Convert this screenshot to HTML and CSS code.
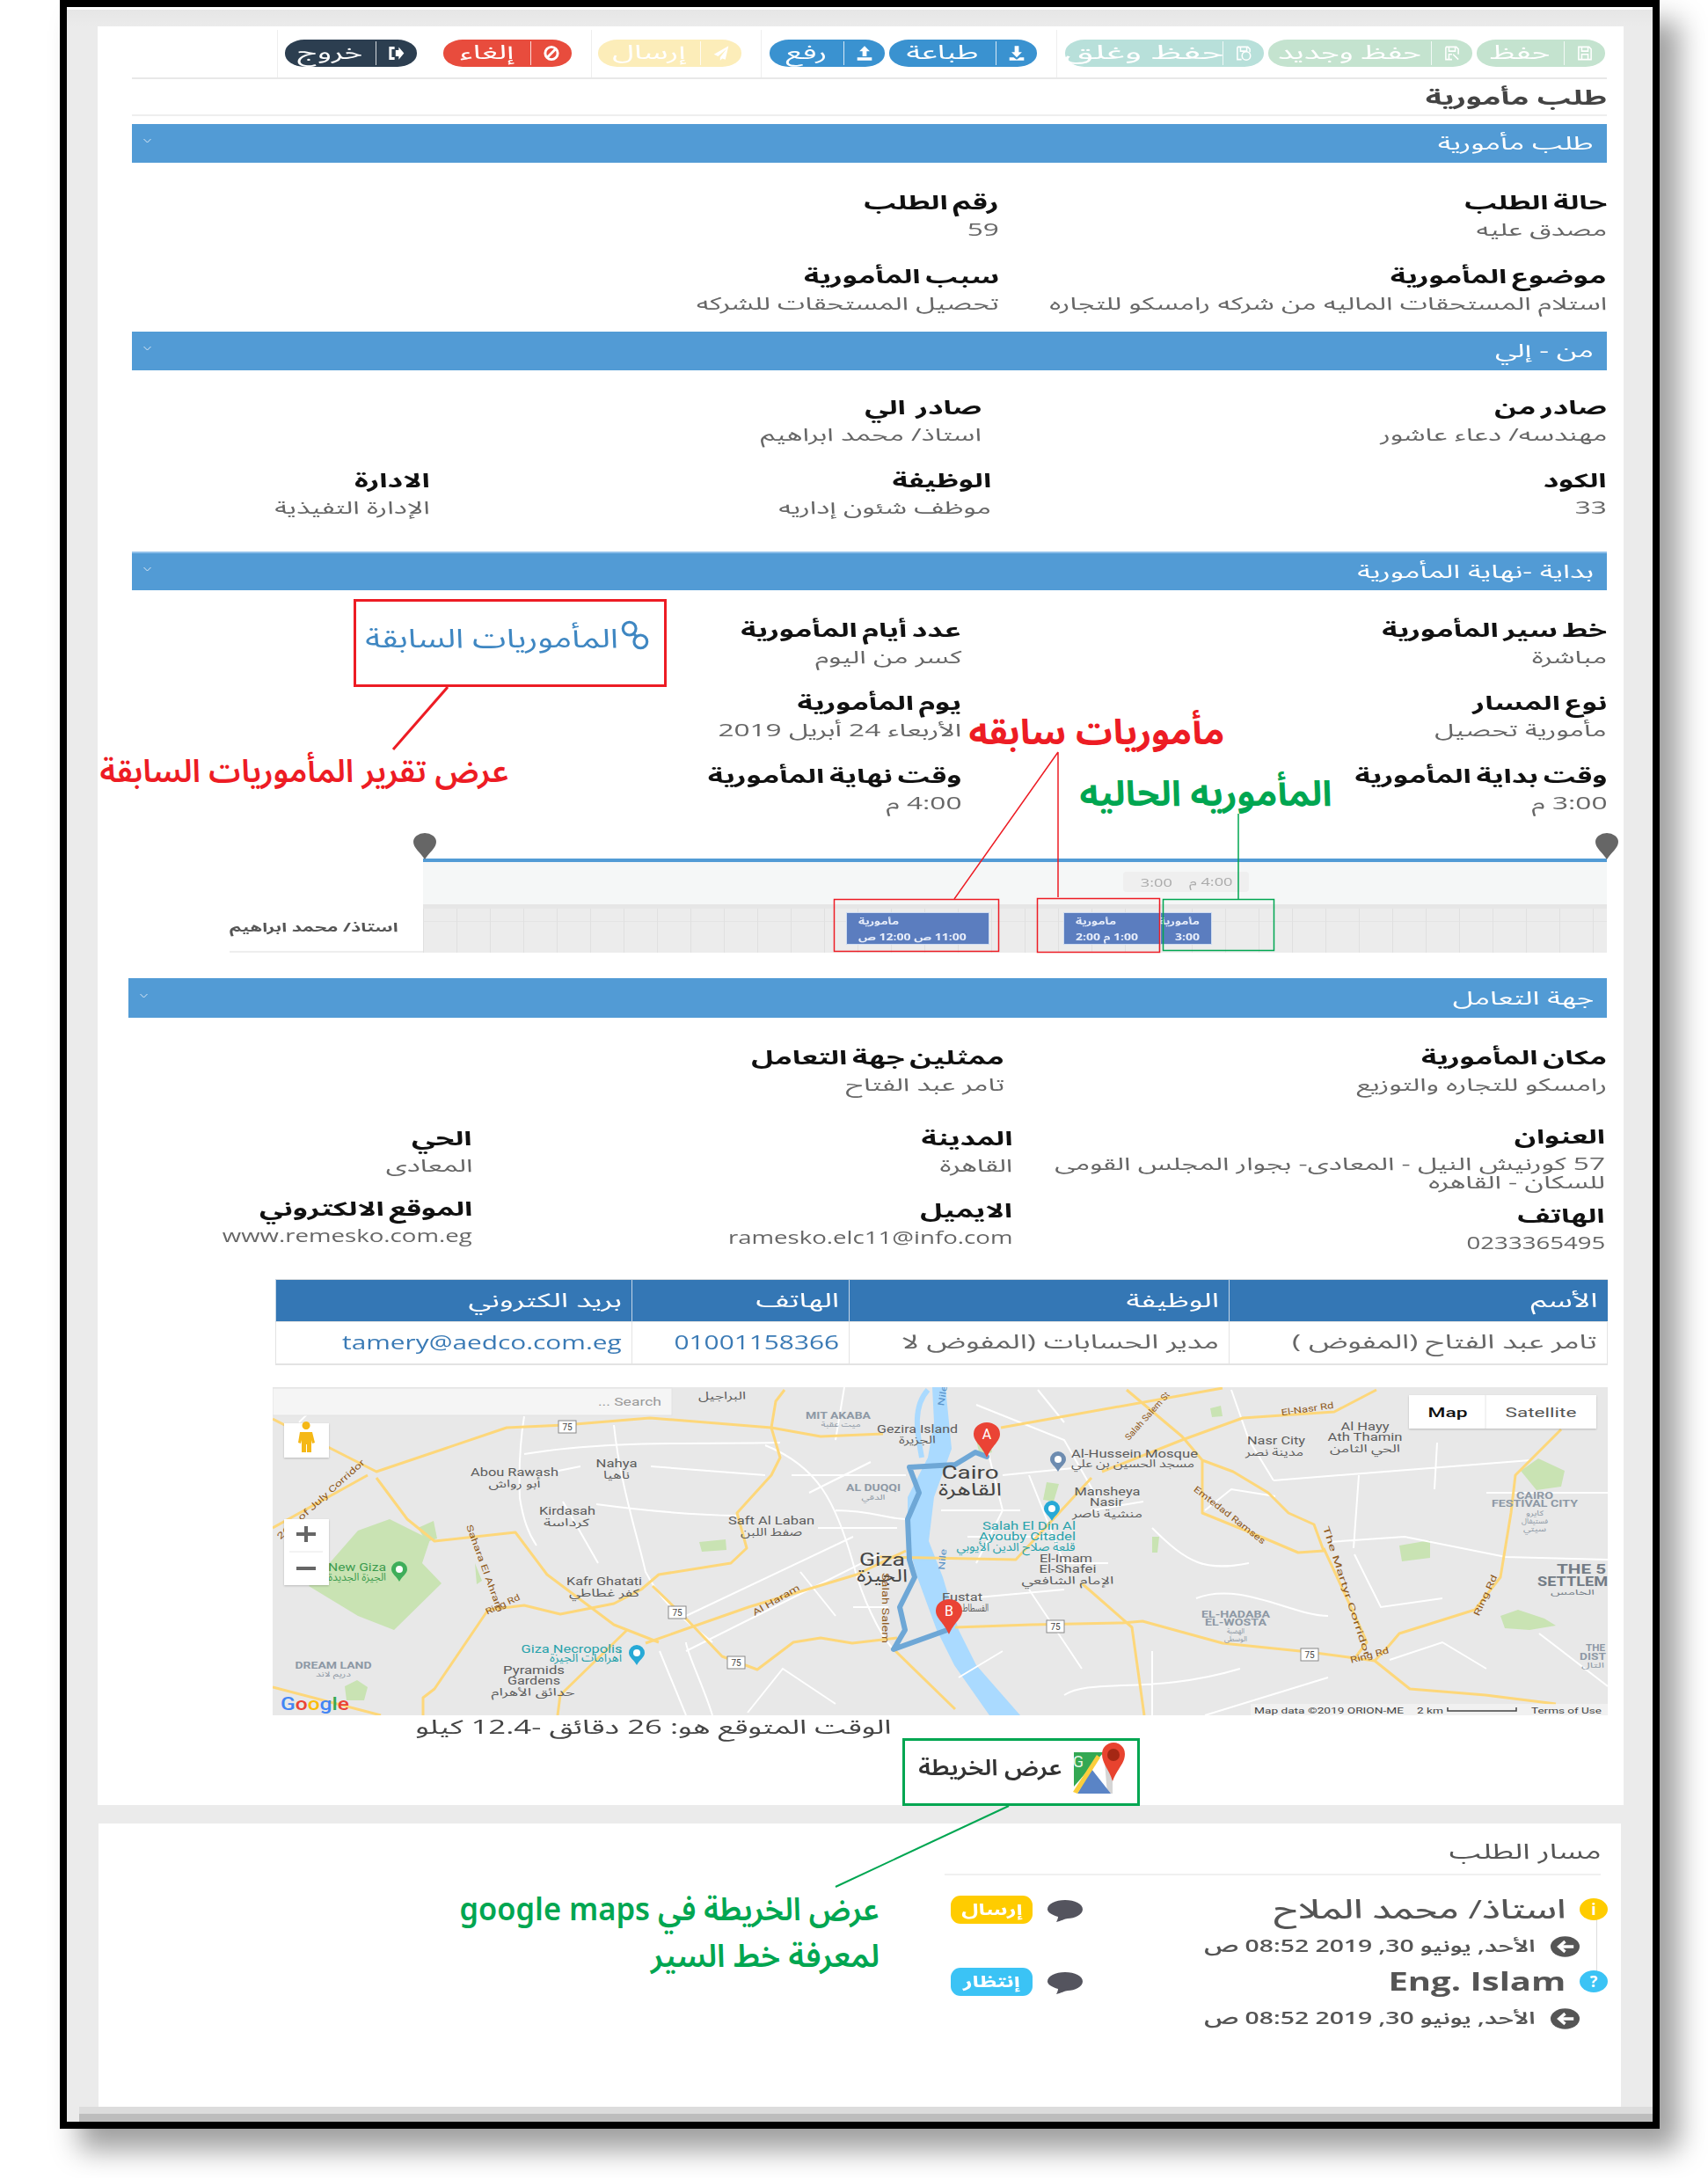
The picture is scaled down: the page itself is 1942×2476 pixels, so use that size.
FILE: index.html
```html
<!DOCTYPE html>
<html lang="ar" dir="rtl">
<head>
<meta charset="utf-8">
<title>طلب مأمورية</title>
<link rel="stylesheet" href="styles.css">
</head>
<body>
<div class="frame">
  <main class="card card-main">
    <div class="toolbar">
      <div class="tb-group tb-save">
        <a class="btn w146 c-save"><span class="btn-ico"><svg viewBox="0 0 16 16"><path d="M2 2h10l2 2v10H2zM5 2v4h6V2M5 14V9h6v5" class="ico-line"/></svg></span><span class="btn-tx">حفظ</span></a>
        <a class="btn w233 c-save"><span class="btn-ico"><svg viewBox="0 0 16 16"><path d="M2 2h10l2 2v5M2 2v12h6M5 2v4h6V2M5 14V9h3M9 9l5 5" class="ico-line"/></svg></span><span class="btn-tx">حفظ وجديد</span></a>
        <a class="btn w227 c-close"><span class="btn-ico"><svg viewBox="0 0 16 16"><path d="M2 2h10l2 2v3M2 2v12h4M5 2v4h6V2" class="ico-line"/><circle cx="10.500" cy="10.500" r="4" class="ico-line"/></svg></span><span class="btn-tx">حفظ وغلق</span></a>
      </div>
      <div class="tb-group tb-print">
        <a class="btn w168 c-blue"><span class="btn-ico"><svg viewBox="0 0 16 16"><path d="M6 1h4v6h3l-5 5-5-5h3zM1 12h4l3 2 3-2h4v3H1z" class="ico-fill"/></svg></span><span class="btn-tx">طباعة</span></a>
        <a class="btn w131 c-blue"><span class="btn-ico"><svg viewBox="0 0 16 16"><path d="M6 11h4V6h3L8 1 3 6h3zM1 12h14v3H1z" class="ico-fill"/></svg></span><span class="btn-tx">رفع</span></a>
      </div>
      <div class="tb-group tb-send">
        <a class="btn w163 c-send"><span class="btn-ico"><svg viewBox="0 0 16 16"><path d="M15 1L1 9l4 2 8-7-6 8v3l2-2 3 1z" class="ico-fill"/></svg></span><span class="btn-tx">إرسال</span></a>
      </div>
      <div class="tb-group tb-exit">
        <a class="btn w147 c-cancel"><span class="btn-ico"><svg viewBox="0 0 16 16"><circle cx="8" cy="8" r="6" class="ico-bold"/><path d="M4 12l8-8" class="ico-bold"/></svg></span><span class="btn-tx">إلغاء</span></a>
        <a class="btn w150 c-exit"><span class="btn-ico"><svg viewBox="0 0 16 16"><path d="M6 3H2v10h4" class="ico-bold"/><path d="M7 5h3V2l5 6-5 6v-3H7z" class="ico-fill"/></svg></span><span class="btn-tx">خروج</span></a>
      </div>
    </div>

    <h1 class="page-title"><span class="st-title">طلب مأمورية</span></h1>

    <section>
      <div class="bar"><span class="bar-tx">طلب مأمورية</span><svg class="chev" viewBox="0 0 10 6"><path d="M1 1l4 4 4-4"/></svg></div>
      <div class="grid g-req">
        <div class="field"><span class="lb">حالة الطلب</span><span class="vl">مصدق عليه</span></div>
        <div class="field"><span class="lb">رقم الطلب</span><span class="vl">59</span></div>
        <div class="field"><span class="lb">موضوع المأمورية</span><span class="vl">استلام المستحقات الماليه من شركه رامسكو للتجاره</span></div>
        <div class="field"><span class="lb">سبب المأمورية</span><span class="vl">تحصيل المستحقات للشركه</span></div>
      </div>
    </section>

    <section>
      <div class="bar"><span class="bar-tx">من - إلي</span><svg class="chev" viewBox="0 0 10 6"><path d="M1 1l4 4 4-4"/></svg></div>
      <div class="grid g-from">
        <div class="field"><span class="lb">صادر من</span><span class="vl">مهندسه/ دعاء عاشور</span></div>
        <div class="field"><span class="lb">صادر &nbsp;الي</span><span class="vl">استاذ/ محمد ابراهيم</span></div>
      </div>
      <div class="grid g-code">
        <div class="field"><span class="lb">الكود</span><span class="vl">33</span></div>
        <div class="field"><span class="lb">الوظيفة</span><span class="vl">موظف شئون إداريه</span></div>
        <div class="field"><span class="lb">الادارة</span><span class="vl">الإدارة التفيذية</span></div>
      </div>
    </section>

    <section>
      <div class="bar bar-hl"><span class="bar-tx">بداية -نهاية المأمورية</span><svg class="chev" viewBox="0 0 10 6"><path d="M1 1l4 4 4-4"/></svg></div>
      <div class="grid g-period">
        <div class="field"><span class="lb">خط سير المأمورية</span><span class="vl">مباشرة</span></div>
        <div class="field"><span class="lb">عدد أيام المأمورية</span><span class="vl">كسر من اليوم</span></div>
        <a class="prev-link"><svg class="link-ico" viewBox="0 0 32 36"><g class="link-ring"><circle cx="10" cy="11" r="7"/><circle cx="22" cy="25" r="7"/><path d="M14 16l4 4"/></g></svg><span class="link-tx">المأموريات السابقة</span></a>
        <div class="field"><span class="lb">نوع المسار</span><span class="vl">مأمورية تحصيل</span></div>
        <div class="field"><span class="lb">يوم المأمورية</span><span class="vl">الأربعاء 24 أبريل 2019</span></div>
        <div></div>
        <div class="field"><span class="lb">وقت بداية المأمورية</span><span class="vl">3:00 م</span></div>
        <div class="field"><span class="lb">وقت نهاية المأمورية</span><span class="vl">4:00 م</span></div>
      </div>

      <div class="schedule">
        <div class="chart">
          <svg class="pin pin-r" viewBox="0 0 26 30"><path d="M13 30C8 22 0 17 0 10a13 10 0 0 1 26 0c0 7-8 12-13 20z"/></svg>
          <svg class="pin pin-l" viewBox="0 0 26 30"><path d="M13 30C8 22 0 17 0 10a13 10 0 0 1 26 0c0 7-8 12-13 20z"/></svg>
          <div class="chart-tips"><span class="tip-tx">4:00 م</span><span class="tip-tx">3:00</span></div>
          <div class="range"></div>
          <div class="chart-grid">
            <div class="ev ev-a"><span class="ev-t">مأمورية</span><span class="ev-t">11:00 ص 12:00 ص</span></div>
            <div class="ev ev-b"><span class="ev-t">مأمورية</span><span class="ev-t">1:00 م 2:00</span></div>
            <div class="ev ev-c"><span class="ev-t">مأمورية</span><span class="ev-t">3:00</span></div>
          </div>
        </div>
        <div class="sched-label"><span class="sched-tx">استاذ/ محمد ابراهيم</span></div>
      </div>
    </section>

    <section class="sec-party">
      <div class="bar bar-wide"><span class="bar-tx">جهة التعامل</span><svg class="chev" viewBox="0 0 10 6"><path d="M1 1l4 4 4-4"/></svg></div>
      <div class="grid g-place">
        <div class="field"><span class="lb">مكان المأمورية</span><span class="vl">رامسكو للتجاره والتوزيع</span></div>
        <div class="field"><span class="lb">ممثلين جهة التعامل</span><span class="vl">تامر عبد الفتاح</span></div>
      </div>
      <div class="grid g-addr">
        <div class="field"><span class="lb">العنوان</span><span class="vl vl-addr">57 كورنيش النيل - المعادى- بجوار المجلس القومى<br>للسكان - القاهره</span></div>
        <div class="field f-low"><span class="lb">المدينة</span><span class="vl">القاهرة</span></div>
        <div class="field f-low"><span class="lb">الحي</span><span class="vl">المعادى</span></div>
        <div class="field f-r3a"><span class="lb">الهاتف</span><span class="vl" dir="ltr">0233365495</span></div>
        <div class="field f-r3b"><span class="lb">الايميل</span><span class="vl" dir="ltr">ramesko.elc11@info.com</span></div>
        <div class="field f-r3c"><span class="lb">الموقع الالكتروني</span><span class="vl" dir="ltr">www.remesko.com.eg</span></div>
      </div>

      <table class="contacts">
        <thead>
          <tr><th class="col-n"><span class="th-tx">الأسم</span></th><th class="col-j"><span class="th-tx">الوظيفة</span></th><th class="col-p"><span class="th-tx">الهاتف</span></th><th class="col-e"><span class="th-tx">بريد الكتروني</span></th></tr>
        </thead>
        <tbody>
          <tr><td><span class="td-tx">تامر عبد الفتاح (المفوض )</span></td><td><span class="td-tx">مدير الحسابات (المفوض لا</span></td><td><span class="td-tx td-link">01001158366</span></td><td><span class="td-tx td-link">tamery@aedco.com.eg</span></td></tr>
        </tbody>
      </table>

      <div class="map">
        <svg class="map-svg" viewBox="0 0 1518 373" role="img" aria-label="خريطة">
          <rect width="1518" height="373" class="m-bg"/>
          <path class="m-park" d="M97 163L133 150 179 173 170 200 192 223 138 276 97 260 41 226 62 203z"/>
          <path class="m-park" d="M82 340l14-7 12 8-4 15-20 0zM1281 180l35-6 0 20-32 4zM1396 260l20-7 30 10 13 8-30 5-28-2zM1419 95l20-14 30 14-4 18-28 4zM1066 24l12-3 2 12-12 1zM485 176l30-3 1 12-28 2zM880 108l14 2-6 20-12-2zM230 200l8 20-6 4zM165 160l18-8 4 20-12 4zM1000 170l8 0-2 18-6 0zM800 60l14-6 4 20-14 4z"/>
          <path class="m-river" d="M750 0L752 40 745 80 722 125 722 175 733 216 755 276 775 316 815 373H850L800 316 780 276 762 216 746 175 752 125 772 70 765 0z"/>
          <path class="m-river2" d="M745 3C725 25 735 60 738 80"/>
          <g class="m-white">
            <path d="M286 76C380 60 480 65 577 63M388 43C395 110 415 170 424 210 445 250 470 265 500 290M286 33C280 70 280 100 281 126 285 150 290 165 300 180M368 133C420 140 470 145 528 146M0 30L20 15M470 260L660 170M470 300L690 190M560 66C620 90 640 130 660 200 670 240 690 280 704 296M650 0L640 60M590 100L720 100M540 370L580 320 640 360M640 140C680 140 700 150 720 150M500 373C490 340 470 300 470 290M330 130L370 200M300 100L350 90M430 90L560 100M620 160L710 160M610 120L680 85M600 210L640 260M660 250L700 250M30 40L60 10M470 373L440 300"/>
            <path d="M1138 106L1430 83M1201 176L1287 170 1402 193 1518 196M1235 100L1229 183M1324 63L1321 116M1060 140L1090 116 1140 124M900 350C930 330 1000 350 1100 320M1000 160C1040 200 1060 210 1110 200M1050 240C1100 220 1160 260 1200 260M860 100L900 200 950 200M1230 190L1260 250 1330 240M1380 120L1518 120M1440 280L1518 340M1270 310L1330 290 1380 320M810 60L830 140 800 200M760 140H850M790 240L900 230M800 20L900 60 940 130M830 100L930 90M790 170H900M860 230L920 320M870 3L900 40M930 140L990 130M1000 300L1000 373M1060 373L1200 330M780 330L830 300M1090 3L1110 60 1138 106"/>
          </g>
          <g class="m-road">
            <path d="M0 36L118 96 266 46 332 43 429 35 567 46 623 56 694 53"/>
            <path d="M582 3L572 16 567 46 577 80 567 100 528 143 539 183 521 200 439 213 419 230 388 246 327 258 286 248 245 253 184 343 171 353V373"/>
            <path d="M118 103L153 150 184 175 276 165 312 213 388 270 439 290"/>
            <path d="M432 226L470 263 511 306 551 321 592 290 623 285 659 291 710 285"/>
            <path d="M424 291L541 250 664 213 720 186"/>
            <path d="M0 160L108 100M0 341L123 373M403 276L327 350 324 373M704 296L776 366"/>
            <path d="M971 3L1034 56 1057 83 1092 96 1132 120 1155 143 1184 156 1195 186 1166 188 1126 171 1057 143 1057 83"/>
            <path d="M1195 183L1238 276 1244 290 1232 306"/>
            <path d="M776 273L862 270 966 268 989 266 1080 291 1178 301 1253 311 1293 343 1379 350 1459 360"/>
            <path d="M1253 311L1270 293 1281 280 1367 253 1396 216 1408 143 1413 100 1465 48"/>
            <path d="M943 96L1034 60 1103 35 1207 28 1255 3M828 46L1080 1M920 223L977 273 991 373M690 193L845 196 931 103"/>
          </g>
          <path class="m-route" d="M812 79L799 74 776 88 724 91 735 120 722 150 724 196 730 216 713 250 719 276 706 298 767 276"/>

          <g class="m-shield"><rect x="325" y="38" width="20" height="14"/><rect x="450" y="249" width="20" height="14"/><rect x="517" y="306" width="20" height="14"/><rect x="880" y="265" width="20" height="14"/><rect x="1169" y="297" width="20" height="14"/></g>
          <g class="m-sh-tx"><text x="335" y="49">75</text><text x="460" y="260">75</text><text x="527" y="317">75</text><text x="890" y="276">75</text><text x="1179" y="308">75</text></g>

          <g class="m-lab">
            <text x="511" y="14" textLength="54" lengthAdjust="spacingAndGlyphs">البراجيل</text>
            <text x="733" y="52" textLength="92" lengthAdjust="spacingAndGlyphs">Gezira Island</text>
            <text x="733" y="64" textLength="42" lengthAdjust="spacingAndGlyphs">الجزيرة</text>
            <text x="275" y="101" textLength="100" lengthAdjust="spacingAndGlyphs">Abou Rawash</text>
            <text x="275" y="114" textLength="59" lengthAdjust="spacingAndGlyphs">أبو رواش</text>
            <text x="391" y="91" textLength="47" lengthAdjust="spacingAndGlyphs">Nahya</text>
            <text x="391" y="104" textLength="30" lengthAdjust="spacingAndGlyphs">ناهيا</text>
            <text x="335" y="145" textLength="64" lengthAdjust="spacingAndGlyphs">Kirdasah</text>
            <text x="334" y="158" textLength="52" lengthAdjust="spacingAndGlyphs">كرداسة</text>
            <text x="567" y="156" textLength="98" lengthAdjust="spacingAndGlyphs">Saft Al Laban</text>
            <text x="567" y="169" textLength="70" lengthAdjust="spacingAndGlyphs">صفط اللبن</text>
            <text x="377" y="225" textLength="86" lengthAdjust="spacingAndGlyphs">Kafr Ghatati</text>
            <text x="377" y="238" textLength="80" lengthAdjust="spacingAndGlyphs">كفر غطاطي</text>
            <text x="297" y="326" textLength="70" lengthAdjust="spacingAndGlyphs">Pyramids</text>
            <text x="297" y="338" textLength="60" lengthAdjust="spacingAndGlyphs">Gardens</text>
            <text x="296" y="351" textLength="95" lengthAdjust="spacingAndGlyphs">حدائق الأهرام</text>
            <text x="980" y="80" textLength="144" lengthAdjust="spacingAndGlyphs">Al-Hussein Mosque</text>
            <text x="978" y="91" textLength="140" lengthAdjust="spacingAndGlyphs">مسجد الحسين بن علي</text>
            <text x="949" y="123" textLength="75" lengthAdjust="spacingAndGlyphs">Mansheya</text>
            <text x="948" y="135" textLength="38" lengthAdjust="spacingAndGlyphs">Nasir</text>
            <text x="949" y="148" textLength="80" lengthAdjust="spacingAndGlyphs">منشية ناصر</text>
            <text x="902" y="199" textLength="60" lengthAdjust="spacingAndGlyphs">El-Imam</text>
            <text x="904" y="211" textLength="65" lengthAdjust="spacingAndGlyphs">El-Shafei</text>
            <text x="904" y="224" textLength="105" lengthAdjust="spacingAndGlyphs">الإمام الشافعي</text>
            <text x="784" y="243" textLength="46" lengthAdjust="spacingAndGlyphs">Fustat</text>
            <text x="799" y="255" textLength="30" lengthAdjust="spacingAndGlyphs">الفسطاط</text>
            <text x="1141" y="65" textLength="66" lengthAdjust="spacingAndGlyphs">Nasr City</text>
            <text x="1139" y="78" textLength="66" lengthAdjust="spacingAndGlyphs">مدينة نصر</text>
            <text x="1242" y="49" textLength="55" lengthAdjust="spacingAndGlyphs">Al Hayy</text>
            <text x="1242" y="61" textLength="85" lengthAdjust="spacingAndGlyphs">Ath Thamin</text>
            <text x="1242" y="74" textLength="80" lengthAdjust="spacingAndGlyphs">الحي الثامن</text>
          </g>
          <g class="m-big">
            <text x="693" y="203" textLength="52" lengthAdjust="spacingAndGlyphs">Giza</text>
            <text x="693" y="221" textLength="58" lengthAdjust="spacingAndGlyphs">الجيزة</text>
            <text x="793" y="104" textLength="65" lengthAdjust="spacingAndGlyphs">Cairo</text>
            <text x="793" y="123" textLength="72" lengthAdjust="spacingAndGlyphs">القاهرة</text>
          </g>
          <g class="m-area">
            <text x="643" y="36" textLength="74" lengthAdjust="spacingAndGlyphs">MIT AKABA</text>
            <text x="646" y="45" class="m-tiny" textLength="45" lengthAdjust="spacingAndGlyphs">ميت عقبة</text>
            <text x="683" y="118" textLength="62" lengthAdjust="spacingAndGlyphs">AL DUQQI</text>
            <text x="683" y="128" class="m-tiny" textLength="27" lengthAdjust="spacingAndGlyphs">الدقي</text>
            <text x="69" y="320" textLength="87" lengthAdjust="spacingAndGlyphs">DREAM LAND</text>
            <text x="69" y="329" class="m-tiny" textLength="40" lengthAdjust="spacingAndGlyphs">دريم لاند</text>
            <text x="1095" y="262" textLength="78" lengthAdjust="spacingAndGlyphs">EL-HADABA</text>
            <text x="1095" y="271" textLength="70" lengthAdjust="spacingAndGlyphs">EL-WOSTA</text>
            <text x="1095" y="280" class="m-tiny" textLength="20" lengthAdjust="spacingAndGlyphs">الهضبة</text>
            <text x="1095" y="289" class="m-tiny" textLength="26" lengthAdjust="spacingAndGlyphs">الوسطى</text>
            <text x="1435" y="127" textLength="42" lengthAdjust="spacingAndGlyphs">CAIRO</text>
            <text x="1435" y="136" textLength="98" lengthAdjust="spacingAndGlyphs">FESTIVAL CITY</text>
            <text x="1435" y="146" class="m-tiny" textLength="20" lengthAdjust="spacingAndGlyphs">كايرو</text>
            <text x="1435" y="155" class="m-tiny" textLength="30" lengthAdjust="spacingAndGlyphs">فستيفال</text>
            <text x="1435" y="164" class="m-tiny" textLength="26" lengthAdjust="spacingAndGlyphs">سيتي</text>
            <text x="1504" y="300" textLength="22" lengthAdjust="spacingAndGlyphs">THE</text>
            <text x="1501" y="310" textLength="30" lengthAdjust="spacingAndGlyphs">DIST</text>
            <text x="1501" y="319" class="m-tiny" textLength="26" lengthAdjust="spacingAndGlyphs">التال</text>
          </g>
          <g class="m-settle">
            <text x="1488" y="212" textLength="56" lengthAdjust="spacingAndGlyphs">THE 5</text>
            <text x="1478" y="226" textLength="80" lengthAdjust="spacingAndGlyphs">SETTLEM</text>
            <text x="1478" y="236" class="m-tiny" textLength="50" lengthAdjust="spacingAndGlyphs">الخامس</text>
          </g>
          <g class="m-green">
            <text x="96" y="209" textLength="66" lengthAdjust="spacingAndGlyphs">New Giza</text>
            <text x="96" y="220" textLength="66" lengthAdjust="spacingAndGlyphs">الجيزة الجديدة</text>
          </g>
          <g class="m-teal">
            <text x="340" y="302" textLength="115" lengthAdjust="spacingAndGlyphs">Giza Necropolis</text>
            <text x="356" y="312" textLength="82" lengthAdjust="spacingAndGlyphs">أهرامات الجيزة</text>
            <text x="860" y="162" textLength="106" lengthAdjust="spacingAndGlyphs">Salah El Din Al</text>
            <text x="858" y="174" textLength="110" lengthAdjust="spacingAndGlyphs">Ayouby Citadel</text>
            <text x="845" y="186" textLength="135" lengthAdjust="spacingAndGlyphs">قلعة صلاح الدين الأيوبي</text>
          </g>
          <g class="m-rd">
            <text transform="translate(57 130) rotate(-42)" textLength="130" lengthAdjust="spacingAndGlyphs">26th of July Corridor</text>
            <text transform="translate(238 207) rotate(70)" textLength="105" lengthAdjust="spacingAndGlyphs">Sahara El Ahram</text>
            <text transform="translate(263 250) rotate(-25)" textLength="42" lengthAdjust="spacingAndGlyphs">Ring Rd</text>
            <text transform="translate(574 245) rotate(-30)" textLength="60" lengthAdjust="spacingAndGlyphs">Al Haram</text>
            <text transform="translate(693 251) rotate(90)" textLength="80" lengthAdjust="spacingAndGlyphs">Salah Salem</text>
            <text transform="translate(997 35) rotate(-48)" textLength="70" lengthAdjust="spacingAndGlyphs">Salah Salem St</text>
            <text transform="translate(1177 28) rotate(-8)" textLength="60" lengthAdjust="spacingAndGlyphs">El-Nasr Rd</text>
            <text transform="translate(1086 148) rotate(38)" textLength="100" lengthAdjust="spacingAndGlyphs">Emtedad Ramses</text>
            <text transform="translate(1218 233) rotate(72)" textLength="155" lengthAdjust="spacingAndGlyphs">The Martyr Corridor</text>
            <text transform="translate(1382 238) rotate(-65)" textLength="50" lengthAdjust="spacingAndGlyphs">Ring Rd</text>
            <text transform="translate(1248 308) rotate(-15)" textLength="45" lengthAdjust="spacingAndGlyphs">Ring Rd</text>
          </g>
          <g class="m-nile">
            <text transform="translate(765 10) rotate(-80)" textLength="24" lengthAdjust="spacingAndGlyphs">Nile</text>
            <text transform="translate(765 196) rotate(-85)" textLength="24" lengthAdjust="spacingAndGlyphs">Nile</text>
          </g>

          <path class="m-pin-g" d="M144 221c-3-6-9-9-9-14a9 9 0 0 1 18 0c0 5-6 8-9 14z"/>
          <path class="m-pin-t" d="M414 316c-3-6-9-9-9-14a9 9 0 0 1 18 0c0 5-6 8-9 14zM886 152c-3-6-9-9-9-14a9 9 0 0 1 18 0c0 5-6 8-9 14z"/>
          <path class="m-pin-m" d="M893 96c-3-6-9-9-9-14a9 9 0 0 1 18 0c0 5-6 8-9 14z"/>
          <circle cx="893" cy="82" r="4" class="m-pin-c"/><circle cx="144" cy="207" r="4" class="m-pin-c"/><circle cx="414" cy="302" r="4" class="m-pin-c"/><circle cx="886" cy="138" r="4" class="m-pin-c"/>

          <path class="m-marker" d="M812 80C806 66 797 62 797 53a15 13 0 0 1 30 0c0 9-9 13-15 27z"/>
          <text x="812" y="59" class="m-mk-tx">A</text>
          <path class="m-marker" d="M769 281C763 267 754 263 754 254a15 13 0 0 1 30 0c0 9-9 13-15 27z"/>
          <text x="769" y="260" class="m-mk-tx">B</text>

          <rect x="0" y="1" width="454" height="31" class="m-search"/>
          <text x="406" y="21" class="m-search-tx" textLength="72" lengthAdjust="spacingAndGlyphs">... Search</text>

          <rect x="13" y="41" width="51" height="39" class="m-ctl"/>
          <path class="m-peg" d="M38 48a4.500 4.500 0 1 1 .1 0M31 51h14l3 12-3 1-1-4v14h-5v-9h-1v9h-5V60l-1 4-3-1z"/>
          <rect x="13" y="150" width="51" height="75" class="m-ctl"/>
          <path class="m-zoom" d="M27 167h22M38 158v18M27 206h22"/>
          <path class="m-zoom-sep" d="M19 187h38"/>

          <rect x="1292" y="9" width="213" height="38" class="m-ctl"/>
          <path class="m-zoom-sep" d="M1379 9v38"/>
          <text x="1336" y="34" class="m-type-on" textLength="45" lengthAdjust="spacingAndGlyphs">Map</text>
          <text x="1442" y="34" class="m-type" textLength="81" lengthAdjust="spacingAndGlyphs">Satellite</text>

          <rect x="1112" y="360" width="406" height="13" class="m-attr-bg"/>
          <g class="m-attr">
            <text x="1201" y="371" textLength="170" lengthAdjust="spacingAndGlyphs">Map data ©2019 ORION-ME</text>
            <text x="1316" y="371" textLength="30" lengthAdjust="spacingAndGlyphs">2 km</text>
            <text x="1471" y="371" textLength="80" lengthAdjust="spacingAndGlyphs">Terms of Use</text>
          </g>
          <path class="m-scale" d="M1336 364v4h78v-4"/>

          <text x="48" y="367" class="m-google" textLength="78" lengthAdjust="spacingAndGlyphs"><tspan class="g-b">G</tspan><tspan class="g-r">o</tspan><tspan class="g-y">o</tspan><tspan class="g-b">g</tspan><tspan class="g-g">l</tspan><tspan class="g-r">e</tspan></text>
        </svg>
      </div>

      <p class="eta"><span class="eta-tx">الوقت المتوقع هو: 26 دقائق -12.4 كيلو</span></p>

      <div class="map-row">
        <a class="map-link">
          <svg class="gm-ico" viewBox="0 0 55 58">
            <path class="gm-green" d="M0 11h34L0 50z"/>
            <path class="gm-grey" d="M34 11h10v47h-6z"/>
            <path class="gm-blue" d="M20 30L42 58H4z"/>
            <path class="gm-yellow" d="M-1 56L26 14l4 3L4 58z"/>
            <path class="gm-red" d="M44 44C40 30 32 24 32 13a13 13 0 0 1 26 0c0 11-9 17-14 31z"/>
            <circle class="gm-dot" cx="45" cy="14" r="7"/>
            <text x="11" y="28" class="gm-g">G</text>
          </svg>
          <span class="map-link-tx">عرض الخريطة</span>
        </a>
      </div>
    </section>
  </main>

  <aside class="card card-track">
    <h2 class="track-title"><span class="track-title-tx">مسار الطلب</span></h2>
    <ul class="track">
      <li class="track-item">
        <div class="track-main">
          <div class="track-name-row"><span class="dot dot-y">i</span><span class="track-name">استاذ/ محمد الملاح</span></div>
          <div class="track-date-row"><svg class="back" viewBox="0 0 36 26"><ellipse cx="18" cy="13" rx="17" ry="12"/><path d="M28 13H12M18 7l-7 6 7 6"/></svg><span class="track-date">الأحد, يونيو 30, 2019 08:52 ص</span></div>
        </div>
        <div class="track-side">
          <svg class="bubble" viewBox="0 0 42 26"><path d="M21 1c11 0 20 4.500 20 10.500S32 22 24 22c-3 0-8 3-13 4 1-2 2-4 2-6C6 18 1 15 1 11.500 1 5.500 10 1 21 1z"/></svg>
          <span class="badge badge-y"><span class="badge-tx">إرسال</span></span>
        </div>
      </li>
      <li class="track-item">
        <div class="track-main">
          <div class="track-name-row"><span class="dot dot-b">?</span><span class="track-name track-en">Eng. Islam</span></div>
          <div class="track-date-row"><svg class="back" viewBox="0 0 36 26"><ellipse cx="18" cy="13" rx="17" ry="12"/><path d="M28 13H12M18 7l-7 6 7 6"/></svg><span class="track-date">الأحد, يونيو 30, 2019 08:52 ص</span></div>
        </div>
        <div class="track-side">
          <svg class="bubble" viewBox="0 0 42 26"><path d="M21 1c11 0 20 4.500 20 10.500S32 22 24 22c-3 0-8 3-13 4 1-2 2-4 2-6C6 18 1 15 1 11.500 1 5.500 10 1 21 1z"/></svg>
          <span class="badge badge-b"><span class="badge-tx">إنتظار</span></span>
        </div>
      </li>
    </ul>
  </aside>
  <div class="edge"></div>
</div>

<svg class="annot" viewBox="0 0 1942 2476">
  <g class="an-red">
    <rect x="403.500" y="682.500" width="353" height="97"/>
    <path d="M509 781L447 852"/>
    <rect class="thin" x="948.500" y="1022.500" width="187" height="59"/>
    <rect class="thin" x="1179.500" y="1021.500" width="139" height="61"/>
    <path class="thin" d="M1203 855L1085 1022M1203 855V1020"/>
  </g>
  <g class="an-green">
    <rect class="thin" x="1322.500" y="1022.500" width="126" height="58"/>
    <path class="thin" d="M1408 925V1022"/>
    <rect x="1027.500" y="1977.500" width="267" height="74"/>
    <path class="mid" d="M1147 2053L950 2145"/>
  </g>
  <text class="an-t an-tred" x="346" y="889" textLength="465" lengthAdjust="spacingAndGlyphs">عرض تقرير المأموريات السابقة</text>
  <text class="an-t an-tred an-b" x="1247" y="846" textLength="291" lengthAdjust="spacingAndGlyphs">مأموريات سابقه</text>
  <text class="an-t an-tgreen an-b" x="1371" y="916" textLength="287" lengthAdjust="spacingAndGlyphs">المأموريه الحاليه</text>
  <text class="an-t an-tgreen" x="761" y="2183" textLength="477" lengthAdjust="spacingAndGlyphs">عرض الخريطة في google maps</text>
  <text class="an-t an-tgreen" x="870" y="2236" textLength="260" lengthAdjust="spacingAndGlyphs">لمعرفة خط السير</text>
</svg>
</body>
</html>
```
FILE: styles.css
```css
*{box-sizing:border-box}
html,body{margin:0;padding:0;background:#fff}
body{position:relative;width:1942px;height:2476px;overflow:hidden;font-family:"Open Sans","Noto Sans Arabic",sans-serif;color:#555}
a{color:inherit;text-decoration:none}

.frame{position:absolute;left:68px;top:0;width:1819px;height:2420px;border:8px solid #000;background:linear-gradient(#fff 3px,#e6e6e6 3px,#ebebeb 22px);box-shadow:22px 24px 30px rgba(0,0,0,.38);padding:22px 33px 0 35px;display:flex;flex-direction:column}
.card{background:#fff}
.card-main{height:2022px;padding:0 19px 0 39px}
.card-track{height:322px;margin:21px 3px 0 1px;padding:0 23px 0 0}
.edge{height:17px;margin:0 -33px 0 -21px;background:linear-gradient(#dcdcdc 8px,#bdbdbd 8px)}

/* toolbar */
.toolbar{display:flex;height:56px;margin-top:4px;border-bottom:2px solid #e8e8e8}
.tb-group{display:flex;gap:5px;padding-top:11px;border-left:1px solid #eee;height:54px}
.tb-save{padding-right:2px;padding-left:9px;width:626px}
.tb-print{padding-right:22px;padding-left:9px;width:336px}
.tb-send{padding-right:22px;width:193px}
.tb-exit{padding-right:22px;gap:30px;width:357px;padding-left:8px}
.btn{display:flex;height:31px;border-radius:22px/15px;color:#fff}
.btn-ico{width:47px;flex:none;display:flex;align-items:center;justify-content:center;border-left:1px solid rgba(255,255,255,.8);margin:2px 0}
.btn-ico svg{width:22px;height:19px}
.btn-tx{flex:1;text-align:center;font-size:22px;line-height:27px;transform:scaleX(1.62);transform-origin:50% 50%;white-space:nowrap}
.c-close .btn-tx{transform:scaleX(1.95)}
.w146{width:146px}.w233{width:233px}.w227{width:227px}.w168{width:168px}.w131{width:131px}.w163{width:163px}.w147{width:147px}.w150{width:150px}
.c-save{background:#c4e3cf}
.c-close{background:#b8e0da}
.c-blue{background:#3a92d0}
.c-send{background:#fcedb9}
.c-cancel{background:#e84c3d}
.c-exit{background:#2c3e50}
.ico-line{fill:none;stroke:#fff;stroke-width:1.3}
.ico-fill{fill:#fff}
.ico-bold{fill:none;stroke:#fff;stroke-width:2.500}

.page-title{margin:0 0 9px;height:42px;padding-top:1px;border-bottom:2px solid #eee;font-size:23px;font-weight:700;line-height:38px;color:#444;display:flex}
.st-title{transform:scaleX(1.55);transform-origin:100% 50%;white-space:nowrap}

/* sections */
.bar{height:44px;background:#529bd5;display:flex;justify-content:space-between;align-items:center;padding:0 15px 0 12px}
.bar-hl{border-top:2px solid #8fc0ea}
.bar-wide{margin:0 0 0 -4px;height:45px}
.bar-tx{color:#fff;font-size:21px;transform:scaleX(1.6);transform-origin:100% 50%;white-space:nowrap}
.chev{width:11px;height:6px;margin-bottom:6px;fill:none;stroke:#dceaf6;stroke-width:1}

.grid{display:grid}
.g-req{grid-template-columns:691px 1fr;row-gap:20px;padding:28px 0 16px}
.g-from{grid-template-columns:711px 1fr;padding:25px 0 0}
.g-code{grid-template-columns:700px 638px 1fr;padding:19px 0 34px}
.g-period{grid-template-columns:734px 336px 1fr;row-gap:19px;padding:28px 0 0}
.g-place{grid-template-columns:685px 1fr;padding:28px 0 0}
.g-addr{grid-template-columns:674px 614px 1fr;padding:26px 2px 0 0}

.field{display:flex;flex-direction:column;align-items:flex-start;height:64px}
.lb{font-size:22px;font-weight:700;line-height:32px;color:#111;word-spacing:-2px;transform:scaleX(1.54);transform-origin:100% 50%;white-space:nowrap}
.vl{font-size:20px;line-height:32px;color:#666;transform:scaleX(1.58);transform-origin:100% 50%;white-space:nowrap}
.vl[dir=ltr]{transform:scaleX(1.38)}
.vl-addr{line-height:21px;padding-top:5px}
.f-low{margin-top:2px}
.f-r3a{margin-top:24px}
.f-r3b{margin-top:18px}
.f-r3c{margin-top:16px}

.prev-link{display:flex;align-items:flex-start;color:#3f87c2;height:64px;padding-right:17px}
.link-ico{width:36px;height:38px;flex:none;fill:none;stroke:#3f87c2;stroke-width:3;margin-top:4px}
.link-tx{font-size:30px;line-height:52px;margin-right:1px;transform:scaleX(1.29);transform-origin:100% 50%;white-space:nowrap}

/* schedule */
.schedule{display:flex;margin-top:47px;height:107px}
.chart{position:relative;width:1346px;flex:none;border-top:4px solid #529bd5;background:#f5f7f7}
.pin{position:absolute;width:26px;height:30px;top:-33px;fill:#666}
.pin-r{right:-13px}
.pin-l{left:-11px}
.chart-tips{position:absolute;left:796px;top:11px;width:143px;height:23px;background:#efefef;border-radius:4px;display:flex;align-items:center;justify-content:space-around;padding:0 10px}
.tip-tx{font-size:13px;color:#aaa;transform:scaleX(1.4);white-space:nowrap}
.range{position:absolute;left:840px;top:48px;width:55px;height:5px;background:#b5dcf5}
.range::before,.range::after{content:"";position:absolute;top:0;border:8px solid transparent;border-top-color:#aaa;border-bottom:0}
.range::before{right:-8px}
.range::after{left:-8px}
.chart-grid{position:absolute;inset:48px 0 0;border-top:5px solid #e6e6e6;background-color:#ececec;background-image:repeating-linear-gradient(90deg,#e0e0e0 0 1px,transparent 1px 38px),linear-gradient(transparent 14px,#e4e4e4 14px,#e4e4e4 15px,transparent 15px)}
.ev{position:absolute;top:4px;height:37px;background:#5b7dbf;border:1px solid #cfdcf0;display:flex;flex-direction:column;align-items:flex-end;padding:0 13px}
.ev-a{left:481px;width:163px}
.ev-b{left:728px;width:110px}
.ev-c{left:838px;width:59px;align-items:flex-start}
.ev-t{color:#e8eefa;font-size:10px;line-height:18px;font-weight:700;white-space:nowrap;transform:scaleX(1.4);transform-origin:0 50%}
.ev-c .ev-t{transform-origin:100% 50%}
.sched-label{width:220px;flex:none;align-self:flex-end;height:55px;border-bottom:2px solid #eee;padding-right:28px;display:flex;align-items:center}
.sched-tx{font-size:14px;font-weight:700;color:#555;transform:scaleX(1.55);transform-origin:100% 50%;white-space:nowrap}

/* party */
.sec-party{margin-top:29px}
.contacts{width:1514px;margin:25px -1px 0 0;border-collapse:collapse;table-layout:fixed}
.contacts th{height:48px;background:#3477b5;border-top:1px solid #ddd;border-left:1px solid #c5d6e6;padding:0 11px;text-align:right;font-weight:400}
.contacts td{height:48px;border:1px solid #e3e3e3;border-bottom-width:2px;padding:0 11px;text-align:right}
.col-n{width:430px}.col-j{width:432px}.col-p{width:247px}.col-e{width:405px}
.th-tx{display:inline-block;color:#fff;font-size:22px;transform:scaleX(1.6);transform-origin:100% 50%;white-space:nowrap}
.td-tx{display:inline-block;color:#666;font-size:22px;transform:scaleX(1.55);transform-origin:100% 50%;white-space:nowrap}
.td-tx.td-link{color:#3a7ab5;direction:ltr;font-size:21px;transform:scaleX(1.42)}

.map{width:1518px;height:373px;margin:25px -1px 0 0}
.map-svg{display:block;width:1518px;height:373px;font-family:Roboto,"Noto Sans Arabic",sans-serif;direction:ltr}
.map-svg text{text-anchor:middle}
.m-bg{fill:#e8e8e8}
.m-park{fill:#c9e3b3}
.m-river{fill:#aadaff}
.m-river2{fill:none;stroke:#aadaff;stroke-width:6}
.m-white path{fill:none;stroke:#fff;stroke-width:2}
.m-road path{fill:none;stroke:#fdd77a;stroke-width:3;stroke-linejoin:round}
.m-route{fill:none;stroke:#6ea7d6;stroke-width:6;stroke-linejoin:round;stroke-linecap:round}
.m-shield rect{fill:#fff;stroke:#888;stroke-width:1}
.m-sh-tx text{font-size:10px;fill:#444}
.m-lab text{font-size:12px;fill:#5c5c5c}
.m-big text{font-size:20px;fill:#444}
.m-area text{font-size:10px;font-weight:700;fill:#8d98a5}
.m-area .m-tiny,.m-settle .m-tiny{font-size:8px;font-weight:400}
.m-settle text{font-size:14px;font-weight:700;fill:#737c86}
.m-green text{font-size:12px;fill:#3c9b4e}
.m-teal text{font-size:13px;fill:#28a2ab}
.m-rd text{font-size:10px;fill:#8f5a1c}
.m-nile text{font-size:10px;fill:#5a93c9}
.m-pin-g{fill:#3fae5a}
.m-pin-t{fill:#27a9d6}
.m-pin-m{fill:#6d8cb0}
.m-pin-c{fill:#fff}
.m-marker{fill:#ea4335}
.m-mk-tx{font-size:16px;fill:#fff}
.m-search{fill:#f5f5f5;stroke:#e2e2e2}
.m-search-tx{font-size:13px;fill:#999}
.m-ctl{fill:#fff;filter:drop-shadow(0 1px 1px rgba(0,0,0,.2))}
.m-peg{fill:#f5b817}
.m-zoom{fill:none;stroke:#666;stroke-width:4}
.m-zoom-sep{fill:none;stroke:#e6e6e6;stroke-width:1}
.m-type-on{font-size:15px;font-weight:500;fill:#111}
.m-type{font-size:15px;fill:#555}
.m-attr-bg{fill:rgba(245,245,245,.7)}
.m-attr text{font-size:9px;fill:#444}
.m-scale{fill:none;stroke:#444;stroke-width:1.500}
.m-google{font-size:21px;font-weight:500}
.g-b{fill:#4285f4}.g-r{fill:#ea4335}.g-y{fill:#fbbc05}.g-g{fill:#34a853}

.eta{margin:0;height:25px;padding-right:813px;line-height:24px;display:flex}
.eta-tx{font-size:22px;color:#444;transform:scaleX(1.58);transform-origin:100% 50%;white-space:nowrap}
.map-row{display:flex;padding-right:551px;height:76px}
.map-link{display:flex;align-items:center;height:70px}
.gm-ico{width:55px;height:58px;flex:none;overflow:visible}
.gm-green{fill:#34a853}.gm-grey{fill:#d5d5d5}.gm-blue{fill:#5a84c6}.gm-yellow{fill:#fbce3c}.gm-red{fill:#e8432f}.gm-dot{fill:#a52714}
.gm-g{font-size:18px;fill:#e8f5e9;font-family:Roboto,sans-serif}
.map-link-tx{font-size:25px;font-weight:600;color:#333;margin-right:14px;transform:scaleX(1.13);transform-origin:100% 50%;white-space:nowrap}

/* track */
.track-title{margin:0;height:59px;padding-top:14px;border-bottom:2px solid #f0f0f0;width:746px;font-weight:400;font-size:24px;line-height:34px;color:#555;display:flex}
.track-title-tx{transform:scaleX(1.47);transform-origin:100% 50%;white-space:nowrap}
.track{list-style:none;margin:0;padding:0;width:746px;position:relative}
.track::before{content:"";position:absolute;right:4px;top:44px;height:70px;width:1px;background:#ddd}
.track-item{display:flex;justify-content:space-between;height:82px;padding-top:23px}
.track-name-row{display:flex;align-items:center;height:30px}
.dot{width:32px;height:25px;border-radius:50%;margin-right:-8px;color:#fff;font:700 18px/25px "Open Sans",sans-serif;text-align:center;flex:none;position:relative;z-index:1}
.dot-y{background:#ffcc00}
.dot-b{background:#3bc3f5}
.track-name{font-size:30px;font-weight:500;color:#555;margin-right:16px;line-height:30px;transform:scaleX(1.41);transform-origin:100% 50%;white-space:nowrap}
.track-en{font-family:"Open Sans",sans-serif;font-size:29px;font-weight:700;transform:scaleX(1.38)}
.track-date-row{display:flex;align-items:center;margin:15px 23px 0 0;height:26px}
.back{width:35px;height:26px;flex:none}
.back ellipse{fill:#555}
.back path{fill:none;stroke:#fff;stroke-width:3.500}
.track-date{font-size:19px;font-weight:600;color:#555;margin-right:16px;transform:scaleX(1.49);transform-origin:100% 50%;white-space:nowrap}
.track-side{display:flex;align-items:flex-start;gap:16px;padding-left:7px}
.bubble{width:42px;height:26px;fill:#54545e;margin-top:4px}
.badge{width:93px;height:32px;border-radius:11px;display:flex;align-items:center;justify-content:center}
.badge-y{background:#ffcc00}
.badge-b{background:#3bc3f5}
.badge-tx{color:#fff;font-size:18px;font-weight:700;transform:scaleX(1.45);white-space:nowrap}

/* reviewer annotations drawn over the screenshot */
.annot{position:absolute;left:0;top:0;width:1942px;height:2476px;pointer-events:none;font-family:"Noto Sans Arabic",serif}
.an-red rect,.an-red path{fill:none;stroke:#ed1c24;stroke-width:3}
.an-green rect,.an-green path{fill:none;stroke:#00a651;stroke-width:3}
.annot .thin{stroke-width:1.500}
.annot .mid{stroke-width:2}
.an-t{text-anchor:middle;font-size:36px;font-weight:600}
.an-tred{fill:#ed1c24}
.an-tgreen{fill:#00a651}
.an-t.an-b{font-weight:700;font-size:40px}
```
